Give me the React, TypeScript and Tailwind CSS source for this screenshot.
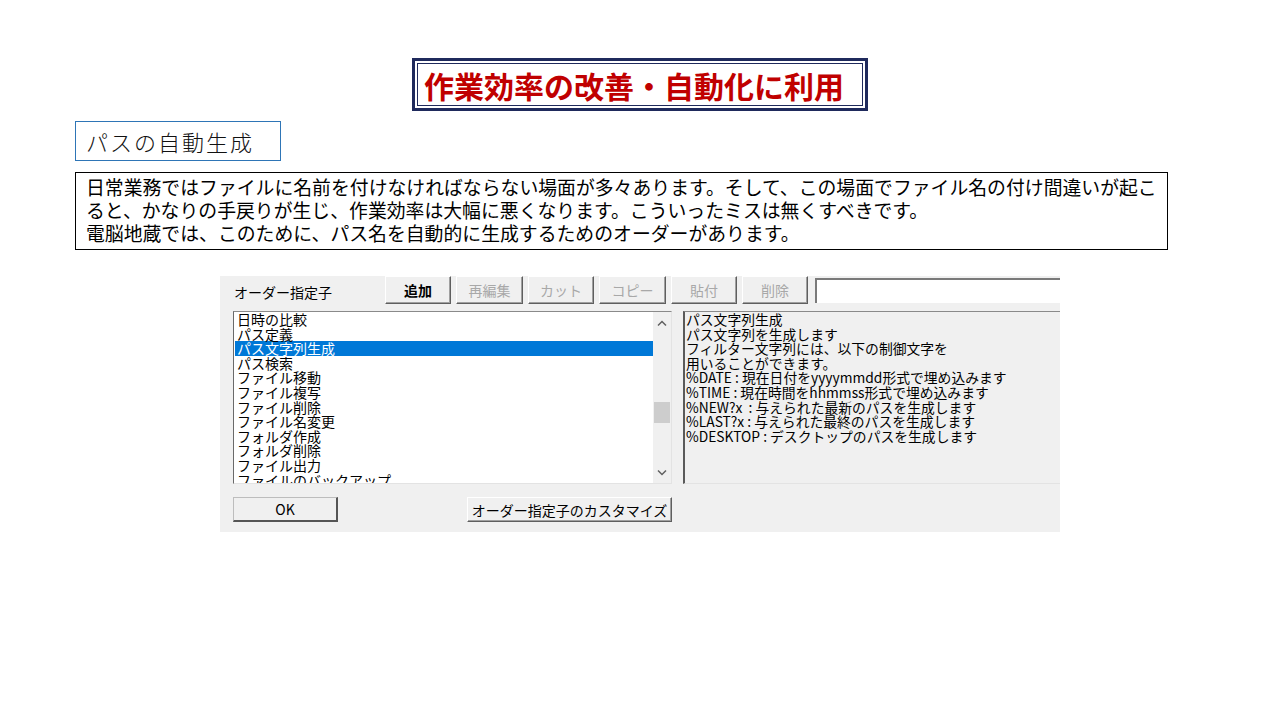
import React from "react";

const items = [
  "日時の比較",
  "パス定義",
  "パス文字列生成",
  "パス検索",
  "ファイル移動",
  "ファイル複写",
  "ファイル削除",
  "ファイル名変更",
  "フォルダ作成",
  "フォルダ削除",
  "ファイル出力",
  "ファイルのバックアップ",
];

const desc = [
  "パス文字列生成",
  "パス文字列を生成します",
  "フィルター文字列には、以下の制御文字を",
  "用いることができます。",
  "%DATE : 現在日付をyyyymmdd形式で埋め込みます",
  "%TIME : 現在時間をhhmmss形式で埋め込みます",
  "%NEW?x  : 与えられた最新のパスを生成します",
  "%LAST?x : 与えられた最終のパスを生成します",
  "%DESKTOP : デスクトップのパスを生成します",
];

function WinButton({
  label,
  disabled,
  bold,
  className,
}: {
  label: string;
  disabled?: boolean;
  bold?: boolean;
  className?: string;
}) {
  return (
    <div
      className={
        "flex items-center justify-center bg-[#f0f0f0] border border-t-white border-l-white border-r-[#5f5f5f] border-b-[#5f5f5f] shadow-[inset_-1px_-1px_0_#a0a0a0] text-[14px] leading-none " +
        (disabled ? "text-[#a8a8a8] " : "text-black ") +
        (bold ? "font-bold " : "") +
        (className ?? "")
      }
    >
      {label}
    </div>
  );
}

export default function App() {
  return (
    <div className="w-[1280px] h-[720px] bg-white overflow-hidden font-['Noto_Sans_CJK_JP',sans-serif]">
      {/* Title */}
      <div className="flex justify-center pt-[58px]">
        <div className="w-[456px] h-[53px] border-[3px] border-[#1f2a5c] p-[2px] bg-white">
          <div className="h-full border border-[#1f2a5c] flex items-center pl-[6px] text-[30px] leading-none font-bold text-[#c00000] whitespace-nowrap">
            作業効率の改善・自動化に利用
          </div>
        </div>
      </div>

      {/* Subtitle */}
      <div className="ml-[75px] mt-[10px] w-[206px] h-[40px] border border-[#2e75b6] flex items-center pl-[10px] text-[22px] tracking-[2px] font-light text-[#111] whitespace-nowrap">
        パスの自動生成
      </div>

      {/* Paragraph */}
      <div className="ml-[75px] mt-[11px] w-[1093px] h-[78px] border border-black pl-[10px] pt-[2px] text-[18.85px] leading-[23px] text-black whitespace-nowrap overflow-hidden">
        <div>日常業務ではファイルに名前を付けなければならない場面が多々あります。そして、この場面でファイル名の付け間違いが起こ</div>
        <div>ると、かなりの手戻りが生じ、作業効率は大幅に悪くなります。こういったミスは無くすべきです。</div>
        <div>電脳地蔵では、このために、パス名を自動的に生成するためのオーダーがあります。</div>
      </div>

      {/* Dialog */}
      <div className="ml-[220px] mt-[26px] w-[840px] h-[256px] bg-[#f0f0f0] flex flex-col">
        {/* Row 1 */}
        <div className="flex items-center h-[28px]">
          <div className="w-[165px] pl-[14px] pt-[4px] text-[14px] text-black whitespace-nowrap">
            オーダー指定子
          </div>
          <div className="flex gap-[5px]">
            <WinButton label="追加" bold className="w-[66px] h-[28px]" />
            <WinButton label="再編集" disabled className="w-[67px] h-[28px]" />
            <WinButton label="カット" disabled className="w-[66px] h-[28px]" />
            <WinButton label="コピー" disabled className="w-[67px] h-[28px]" />
            <WinButton label="貼付" disabled className="w-[66px] h-[28px]" />
            <WinButton label="削除" disabled className="w-[66px] h-[28px]" />
          </div>
          <div className="flex-1 ml-[7px] h-[25px] bg-white border-t-2 border-l-2 border-[#7a7a7a]" />
        </div>

        {/* Row 2 */}
        <div className="flex mt-[7px] pl-[13px]">
          <div className="w-[439px] h-[173px] bg-white border border-t-[#8a8a8a] border-l-[#6a6a6a] border-r-[#e3e3e3] border-b-[#e3e3e3] flex overflow-hidden">
            <div className="flex-1 pl-[1px] overflow-hidden">
              {items.map((it, i) => (
                <div
                  key={it}
                  className={
                    "h-[14.6px] leading-[14.6px] text-[14px] pl-[2px] whitespace-nowrap " +
                    (i === 2 ? "bg-[#0078d7] text-white" : "text-black")
                  }
                >
                  {it}
                </div>
              ))}
            </div>
            <div className="w-[18px] bg-[#f0f0f0] flex flex-col items-center">
              <div className="h-[18px] w-full flex items-center justify-center mt-[2px]">
                <svg width="10" height="7" viewBox="0 0 10 7">
                  <path d="M1 5.5 L5 1.5 L9 5.5" stroke="#606060" strokeWidth="1.5" fill="none" />
                </svg>
              </div>
              <div className="mt-[70px] w-[16px] h-[21px] bg-[#cdcdcd]" />
              <div className="flex-1" />
              <div className="h-[18px] w-full flex items-center justify-center mb-[2px]">
                <svg width="10" height="7" viewBox="0 0 10 7">
                  <path d="M1 1.5 L5 5.5 L9 1.5" stroke="#606060" strokeWidth="1.5" fill="none" />
                </svg>
              </div>
            </div>
          </div>
          <div className="ml-[11px] flex-1 h-[173px] bg-[#f0f0f0] border-t border-l-2 border-b border-t-[#8a8a8a] border-l-[#5a5a5a] border-b-[#e3e3e3] pl-[1px] overflow-hidden">
            {desc.map((d) => (
              <div key={d} className="h-[14.6px] leading-[14.6px] text-[13.8px] text-black whitespace-pre">
                {d}
              </div>
            ))}
          </div>
        </div>

        {/* Row 3 */}
        <div className="flex mt-[13px] pl-[13px]">
          <div className="w-[105px] h-[25px] flex items-center justify-center bg-[#f0f0f0] border border-t-[#bdbdbd] border-l-[#bdbdbd] border-r-2 border-b-2 border-r-[#555] border-b-[#555] text-[14px] text-black">
            OK
          </div>
          <WinButton label="オーダー指定子のカスタマイズ" className="ml-[129px] w-[205px] h-[25px]" />
        </div>
      </div>
    </div>
  );
}
